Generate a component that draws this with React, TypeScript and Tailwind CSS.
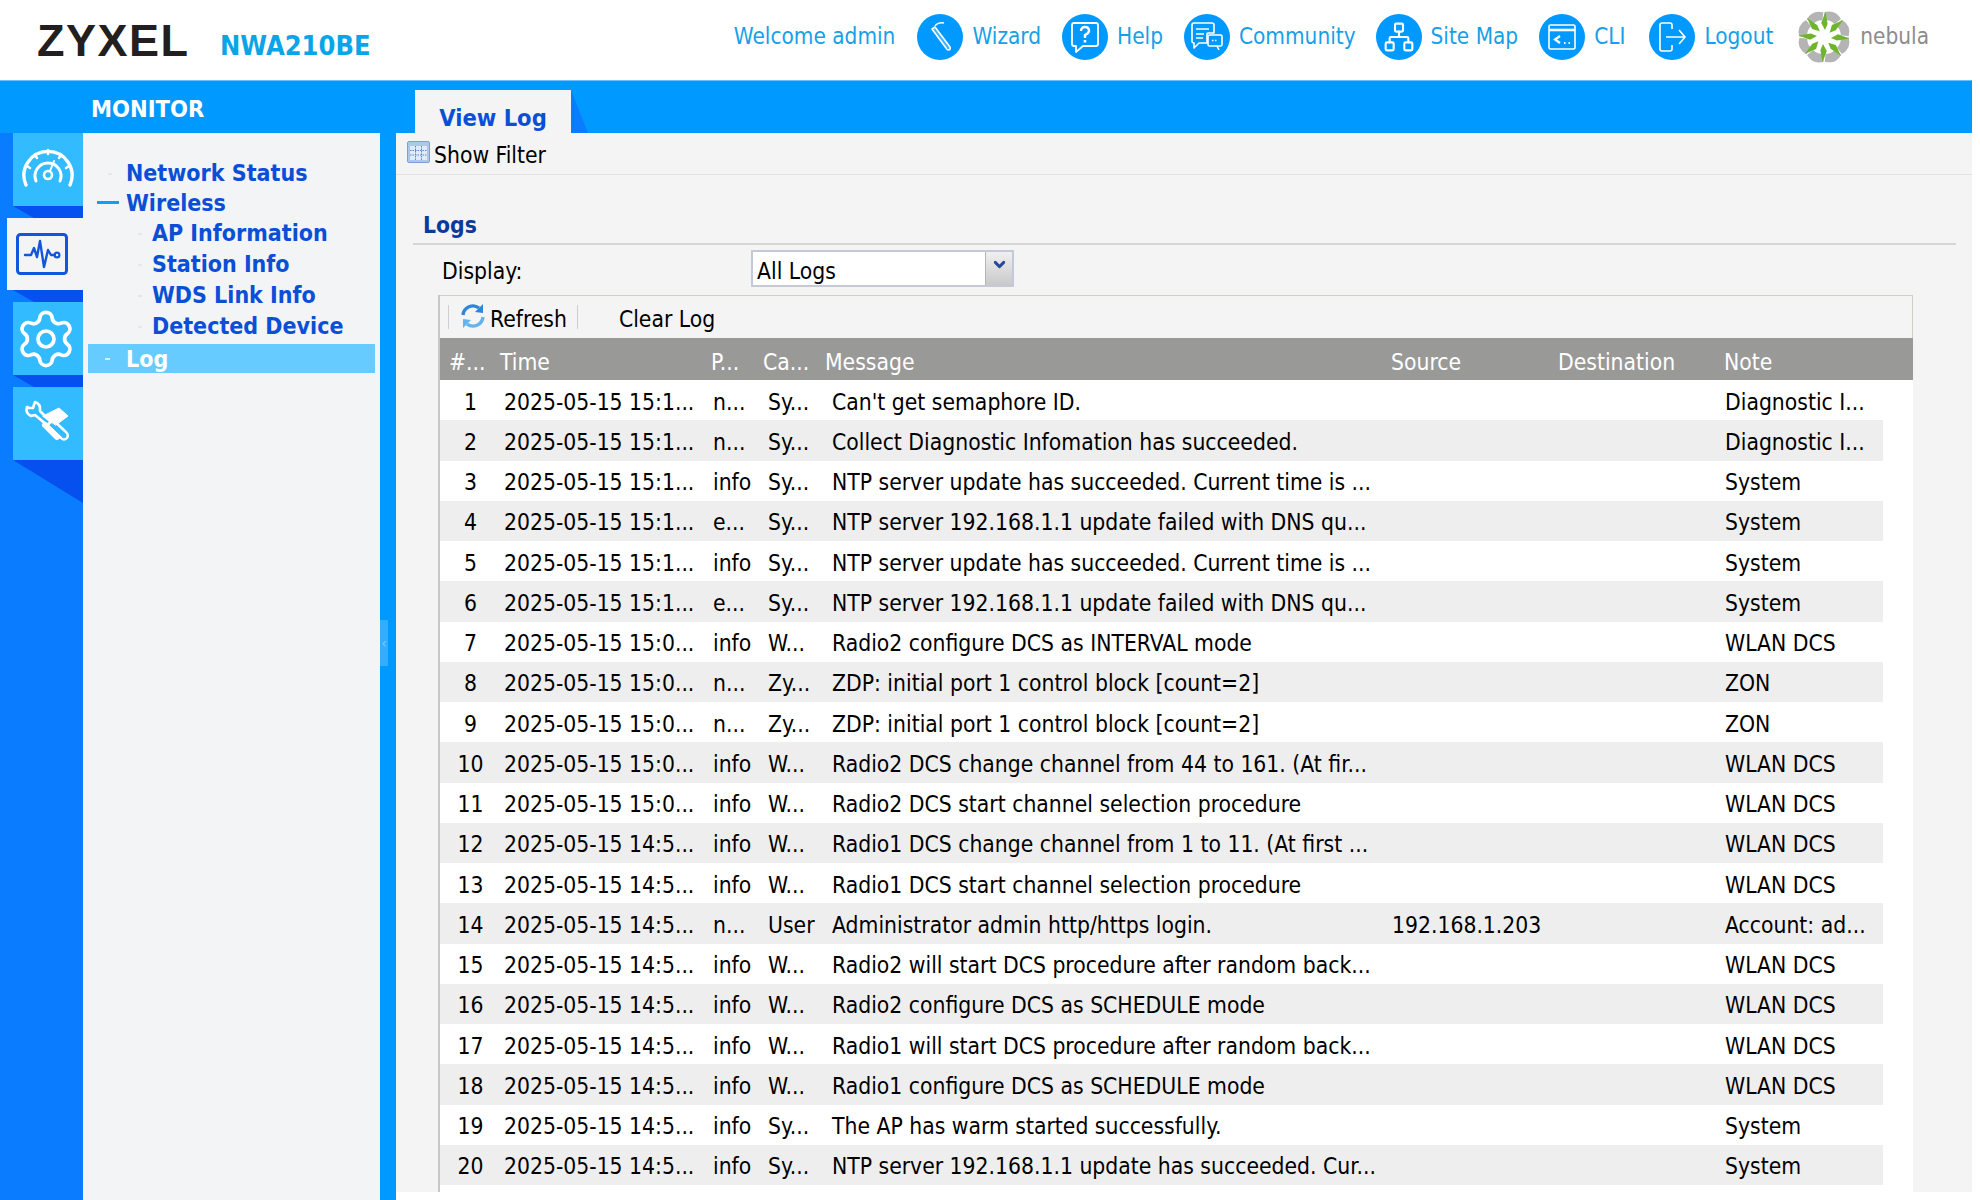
import { ChevronDown, Network, Settings } from 'lucide-react';

type Row = [string, string, string, string, string, string, string];

const T1 = '2025-05-15 15:1...';
const T0 = '2025-05-15 15:0...';
const T4 = '2025-05-15 14:5...';

const rows: Row[] = [
  ['1', T1, 'n...', 'Sy...', "Can't get semaphore ID.", '', 'Diagnostic I...'],
  ['2', T1, 'n...', 'Sy...', 'Collect Diagnostic Infomation has succeeded.', '', 'Diagnostic I...'],
  ['3', T1, 'info', 'Sy...', 'NTP server update has succeeded. Current time is ...', '', 'System'],
  ['4', T1, 'e...', 'Sy...', 'NTP server 192.168.1.1 update failed with DNS qu...', '', 'System'],
  ['5', T1, 'info', 'Sy...', 'NTP server update has succeeded. Current time is ...', '', 'System'],
  ['6', T1, 'e...', 'Sy...', 'NTP server 192.168.1.1 update failed with DNS qu...', '', 'System'],
  ['7', T0, 'info', 'W...', 'Radio2 configure DCS as INTERVAL mode', '', 'WLAN DCS'],
  ['8', T0, 'n...', 'Zy...', 'ZDP: initial port 1 control block [count=2]', '', 'ZON'],
  ['9', T0, 'n...', 'Zy...', 'ZDP: initial port 1 control block [count=2]', '', 'ZON'],
  ['10', T0, 'info', 'W...', 'Radio2 DCS change channel from 44 to 161. (At fir...', '', 'WLAN DCS'],
  ['11', T0, 'info', 'W...', 'Radio2 DCS start channel selection procedure', '', 'WLAN DCS'],
  ['12', T4, 'info', 'W...', 'Radio1 DCS change channel from 1 to 11. (At first ...', '', 'WLAN DCS'],
  ['13', T4, 'info', 'W...', 'Radio1 DCS start channel selection procedure', '', 'WLAN DCS'],
  ['14', T4, 'n...', 'User', 'Administrator admin http/https login.', '192.168.1.203', 'Account: ad...'],
  ['15', T4, 'info', 'W...', 'Radio2 will start DCS procedure after random back...', '', 'WLAN DCS'],
  ['16', T4, 'info', 'W...', 'Radio2 configure DCS as SCHEDULE mode', '', 'WLAN DCS'],
  ['17', T4, 'info', 'W...', 'Radio1 will start DCS procedure after random back...', '', 'WLAN DCS'],
  ['18', T4, 'info', 'W...', 'Radio1 configure DCS as SCHEDULE mode', '', 'WLAN DCS'],
  ['19', T4, 'info', 'Sy...', 'The AP has warm started successfully.', '', 'System'],
  ['20', T4, 'info', 'Sy...', 'NTP server 192.168.1.1 update has succeeded. Cur...', '', 'System'],
];

const COLS = 'grid grid-cols-[58px_210px_52px_62px_564px_167px_167px_163px]';

function Circle({ children }: { children: React.ReactNode }) {
  return (
    <span className="w-[46px] h-[46px] rounded-full bg-[#0099ff] flex items-center justify-center text-white shrink-0">
      {children}
    </span>
  );
}

function WandIcon() {
  return (
    <svg width="34" height="34" viewBox="0 0 34 34" fill="none" stroke="white" strokeWidth="1.6">
      <path d="M9 9 L12 7 L27 27 Q28 30 25 30 Q24 30 23 28 Z" strokeLinejoin="round" fill="#bfe6ff" fillOpacity="0.35" />
      <path d="M12 6 Q15 2 21 3" />
    </svg>
  );
}

function HelpIcon() {
  return (
    <svg width="34" height="34" viewBox="0 0 34 34" fill="none" stroke="white" strokeWidth="1.8">
      <path d="M6 3 H28 Q30 3 30 5 V24 Q30 26 28 26 H15 L8 32 V26 H6 Q4 26 4 24 V5 Q4 3 6 3 Z" strokeLinejoin="round" />
      <path d="M13 11 Q13 7 17 7 Q21 7 21 11 Q21 13 17 15 V18" strokeWidth="2.4" />
      <path d="M17 20 V22.5" strokeWidth="2.6" />
    </svg>
  );
}

function CommunityIcon() {
  return (
    <svg width="36" height="36" viewBox="0 0 36 36" fill="none" stroke="white" strokeWidth="1.6">
      <path d="M5 4 H23 Q25 4 25 6 V14 H19 Q18 14 18 15 V24 H10 L5 29 V24 Q3 24 3 22 V6 Q3 4 5 4 Z" strokeLinejoin="round" />
      <path d="M7 10 H20 M7 15 H15 M7 19 H14" />
      <rect x="19" y="16" width="14" height="11" rx="1.5" />
      <path d="M23 21.5 H29" strokeDasharray="1.5 1.5" />
      <path d="M28 27 L30 31" />
    </svg>
  );
}

function CliIcon() {
  return (
    <svg width="32" height="32" viewBox="0 0 32 32" fill="none" stroke="white" strokeWidth="1.6">
      <rect x="3" y="4" width="26" height="24" rx="1.5" />
      <path d="M3 9 H29" strokeWidth="2.6" />
      <path d="M14 15 L9 18.5 L14 22" strokeWidth="2.2" />
      <path d="M18 22 H19.5 M22.5 22 H24" strokeWidth="2.2" />
    </svg>
  );
}

function LogoutIcon() {
  return (
    <svg width="34" height="34" viewBox="0 0 34 34" fill="none" stroke="white" strokeWidth="1.6">
      <path d="M17 9 V5 Q17 3 15 3 H7 Q5 3 5 5 V29 Q5 31 7 31 H15 Q17 31 17 29 V25" />
      <path d="M11 17 H30 M24 10 L30 17 L24 24" />
    </svg>
  );
}

function NebulaLogo() {
  const angles = [0, 45, 90, 135, 180, 225, 270, 315];
  return (
    <svg width="56" height="56" viewBox="-28 -28 56 56" className="shrink-0">
      {angles.map((a) => (
        <path
          key={a}
          transform={`rotate(${a + 22})`}
          d="M-5 -16 L-9 -23 Q0 -30 9 -23 L5 -16 Q0 -18.5 -5 -16 Z"
          fill="#b4b4b4"
        />
      ))}
      {angles.map((a) => (
        <path key={a} transform={`rotate(${a})`} d="M1 -7 L-2.8 -14 L1.5 -25.5 L3.6 -13 Z" fill="#6fb52c" />
      ))}
    </svg>
  );
}

function RefreshIcon() {
  return (
    <svg width="24" height="26" viewBox="0 0 24 26" fill="none" strokeWidth="3.4" className="ml-[12px] mr-[5px] -mt-[2px]">
      <path d="M2 12 A10 10 0 0 1 18 5" stroke="#2f86d8" />
      <path d="M22 1 L22 10 L14 9 Z" fill="#2f86d8" />
      <path d="M22 14 A10 10 0 0 1 6 21" stroke="#63b4ee" />
      <path d="M2 25 L2 16 L10 17 Z" fill="#63b4ee" />
    </svg>
  );
}

function GaugeIcon() {
  return (
    <svg width="54" height="46" viewBox="0 0 54 46" fill="none" stroke="white" strokeLinecap="round">
      <path d="M5 38 A24 24 0 1 1 49 38" strokeWidth="3.4" />
      <path d="M27 3 V7 M14 8 L16 11 M40 8 L38 11 M6 19 L9 21 M48 19 L45 21" strokeWidth="2.5" />
      <path d="M15 34 A13 13 0 1 1 39 34" strokeWidth="3" />
      <circle cx="27" cy="28" r="4" strokeWidth="2.6" />
      <path d="M29 24 L33 14" strokeWidth="2" />
    </svg>
  );
}

function PulseIcon() {
  return (
    <svg width="52" height="42" viewBox="0 0 52 42" fill="none" stroke="#1356dc" strokeLinecap="round" strokeLinejoin="round">
      <rect x="1.5" y="1.5" width="49" height="39" rx="3" strokeWidth="3" />
      <path d="M9 22 H15 L18 15 L21 24 L24 8 L28 34 L32 17 L35 22 H39" strokeWidth="2.4" />
      <circle cx="41" cy="22" r="2.4" strokeWidth="2.2" />
    </svg>
  );
}

function ToolsIcon() {
  return (
    <svg width="50" height="46" viewBox="0 0 50 46" fill="none" stroke="white" strokeLinecap="round" strokeLinejoin="round" className="-mt-[4px]">
      <path d="M4 8 Q2 14 8 17 L12 16 L24 26 L28 23 L17 12 Q18 5 12 3 L10 9 L6 9 Z" strokeWidth="2.6" />
      <path d="M20 17 L36 9 L45 17 L33 26 Z" fill="white" strokeWidth="1" />
      <path d="M24 26 L38 39 Q41 42 44 39 Q46 36 43 33 L30 21 Z" strokeWidth="2.4" />
      <path d="M22 26 L34 38" strokeWidth="6" />
    </svg>
  );
}

function RailTile({ active, children }: { active?: boolean; children: React.ReactNode }) {
  return (
    <div
      className={
        active
          ? 'ml-[7px] h-[72px] bg-[#f4f4f4] flex items-center justify-center pr-[6px]'
          : 'ml-[13px] h-[73px] bg-[#33bbff] flex items-center justify-center'
      }
    >
      {children}
    </div>
  );
}

function RailShade({ tall }: { tall?: boolean }) {
  return (
    <div
      className={
        tall
          ? 'ml-[13px] h-[43px] bg-[#0550ee] [clip-path:polygon(0_0,100%_0,100%_100%)]'
          : 'ml-[13px] h-[12px] bg-[#0550ee] [clip-path:polygon(0_0,100%_0,100%_100%,30%_100%)]'
      }
    />
  );
}

function TreeItem({ label, child, open }: { label: string; child?: boolean; open?: boolean }) {
  return (
    <div className={child ? 'relative h-[31px] pl-[69px] flex items-center' : 'relative h-[30px] pl-[43px] flex items-center'}>
      {open ? (
        <span className="absolute left-[14px] top-[13px] w-[22px] h-[3px] bg-[#0f9dff]" />
      ) : (
        <span className={child ? 'absolute left-[55px] top-[15px] w-[4px] h-[2px] bg-[#dfe9f3]' : 'absolute left-[25px] top-[15px] w-[4px] h-[2px] bg-[#dfe9f3]'} />
      )}
      {label}
    </div>
  );
}

export default function App() {
  return (
    <div className="relative w-[1980px] h-[1200px] overflow-hidden bg-white text-[22.7px] text-black font-['DejaVu_Sans_Condensed','Noto_Sans',sans-serif]">
      {/* Top bar */}
      <header className="w-[1972px] h-[81px] flex items-center text-[#189fe8] border-b border-[#66c2ff]">
        <div className="ml-[37px] w-[183px] text-[45px] leading-none font-bold text-[#231f20] tracking-[1.5px] font-['Liberation_Sans',sans-serif]">ZYXEL</div>
        <div className="text-[27px] font-bold text-[#0aa5e8] mt-[12px]">NWA210BE</div>
        <nav className="ml-auto mr-[43px] mb-[7px] flex items-center text-[22.4px]">
          <span>Welcome admin</span>
          <span className="ml-[22px] mr-[9px]"><Circle><WandIcon /></Circle></span>
          <span>Wizard</span>
          <span className="ml-[21px] mr-[9px]"><Circle><HelpIcon /></Circle></span>
          <span>Help</span>
          <span className="ml-[21px] mr-[9px]"><Circle><CommunityIcon /></Circle></span>
          <span>Community</span>
          <span className="ml-[20px] mr-[9px]"><Circle><Network size={32} strokeWidth={1.6} /></Circle></span>
          <span>Site Map</span>
          <span className="ml-[21px] mr-[9px]"><Circle><CliIcon /></Circle></span>
          <span>CLI</span>
          <span className="ml-[24px] mr-[9px]"><Circle><LogoutIcon /></Circle></span>
          <span>Logout</span>
          <span className="ml-[23px] mr-[8px]"><NebulaLogo /></span>
          <span className="text-[#8c8c8c]">nebula</span>
        </nav>
      </header>

      {/* Blue bar with tab */}
      <div className="w-[1972px] h-[52px] bg-[#0099ff] flex items-end">
        <div className="w-[415px] h-full pl-[91px] pt-[5px] flex items-center font-bold text-white text-[23.5px]">MONITOR</div>
        <div className="w-[156px] h-[43px] pt-[14px] bg-[#f4f4f4] flex items-center justify-center font-bold text-[#0a4fd6] text-[23.5px]">View Log</div>
        <div className="w-[17px] h-[43px] bg-[#0a7cff] [clip-path:polygon(0_0,100%_100%,0_100%)]" />
      </div>

      {/* Body */}
      <div className="flex w-[1972px] h-[1067px]">
        {/* Rail */}
        <aside className="w-[83px] h-full bg-[#0a7cff] flex flex-col">
          <RailTile><GaugeIcon /></RailTile>
          <RailShade />
          <RailTile active><PulseIcon /></RailTile>
          <RailShade />
          <RailTile><Settings size={64} strokeWidth={1.4} color="white" className="-ml-[5px]" /></RailTile>
          <RailShade />
          <RailTile><ToolsIcon /></RailTile>
          <RailShade tall />
        </aside>

        {/* Tree */}
        <aside className="relative w-[297px] h-full bg-[#f3f4f6] pt-[25px] font-bold text-[#0a4fd6] text-[23px]">
          <TreeItem label="Network Status" />
          <TreeItem open label="Wireless" />
          <TreeItem child label="AP Information" />
          <TreeItem child label="Station Info" />
          <TreeItem child label="WDS Link Info" />
          <TreeItem child label="Detected Device" />
          <div className="relative ml-[5px] mr-[5px] h-[29px] mt-[2px] pt-[2px] bg-[#66ccff] text-white flex items-center pl-[38px]">
            <span className="absolute left-[17px] top-[14px] w-[5px] h-[2px] bg-[#d6f1ff]" />
            Log
          </div>
        </aside>

        {/* Splitter strip */}
        <div className="relative w-[16px] h-full bg-[#0099ff]">
          <div className="absolute left-0 top-[487px] w-[8px] h-[46px] bg-[#33adff] flex items-center justify-center text-[#7cd0ff] text-[14px]">‹</div>
        </div>

        {/* Main panel */}
        <main className="flex-1 h-[1059px] bg-[#f4f4f4] flex flex-col">
          <div className="h-[42px] flex items-center pl-[11px] border-b border-[#e2e2e2]">
            <svg width="23" height="22" viewBox="0 0 23 22" className="mr-[4px] -mt-[4px]">
              <rect x="0.5" y="0.5" width="22" height="21" rx="1.5" fill="#a9c8ee" stroke="#7f9fd0" />
              <rect x="3" y="5" width="17" height="14" fill="#dfeafa" />
              <path d="M8.5 5 V19 M14.5 5 V19 M3 9.5 H20 M3 14 H20" stroke="#5d86c4" strokeWidth="1" strokeDasharray="1.5 1" />
            </svg>
            <span className="pt-[4px]">Show Filter</span>
          </div>
          <div className="h-[70px] ml-[17px] mr-[16px] pl-[10px] flex items-end pb-[1px] border-b-2 border-[#d6d6d6] font-bold text-[#0b3a9e]">Logs</div>
          <div className="h-[47px] mb-[3px] pl-[46px] flex items-center">
            <span className="w-[309px] translate-y-[3px]">Display:</span>
            <div className="w-[263px] h-[37px] border-2 border-[#c3c9d6] bg-white flex items-center pl-[4px]">
              <span className="flex-1 translate-y-[3px]">All Logs</span>
              <span className="w-[27px] h-full bg-gradient-to-b from-[#f0f0f0] to-[#c9c9c9] border-l border-[#b4b4b4] flex justify-center pt-[4px]">
                <ChevronDown size={17} strokeWidth={4} color="#24489c" />
              </span>
            </div>
          </div>

          {/* Grid */}
          <div className="flex-1 ml-[42px] mr-[59px] bg-white border-l-2 border-[#c8c8c8] flex flex-col">
            <div className="h-[43px] shrink-0 bg-[#f4f4f4] border-t border-r border-[#cfcfc4] flex items-center pl-[8px]">
              <span className="w-px h-[24px] bg-[#cfcfcf]" />
              <RefreshIcon />
              <span className="pt-[5px]">Refresh</span>
              <span className="w-px h-[24px] bg-[#cfcfcf] ml-[10px]" />
              <span className="ml-[41px] pt-[5px]">Clear Log</span>
            </div>
            <div className={`${COLS} h-[42px] pt-[7px] shrink-0 bg-[#999998] text-white items-center`}>
              <span className="pl-[9px]">#...</span>
              <span className="pl-[2px]">Time</span>
              <span className="pl-[3px]">P...</span>
              <span className="pl-[3px]">Ca...</span>
              <span className="pl-[3px]">Message</span>
              <span className="pl-[5px]">Source</span>
              <span className="pl-[5px]">Destination</span>
              <span className="pl-[4px]">Note</span>
            </div>
            {rows.map((r, i) => (
              <div key={r[0]} className={`${COLS} w-[1443px] h-[40.25px] pt-[3px] shrink-0 items-center whitespace-nowrap ${i % 2 ? 'bg-[#eeeeee]' : 'bg-white'}`}>
                <span className="pl-[3px] text-center">{r[0]}</span>
                <span className="pl-[6px]">{r[1]}</span>
                <span className="pl-[5px]">{r[2]}</span>
                <span className="pl-[8px]">{r[3]}</span>
                <span className="pl-[10px]">{r[4]}</span>
                <span className="pl-[6px]">{r[5]}</span>
                <span />
                <span className="pl-[5px]">{r[6]}</span>
              </div>
            ))}
          </div>
        </main>
      </div>
    </div>
  );
}
